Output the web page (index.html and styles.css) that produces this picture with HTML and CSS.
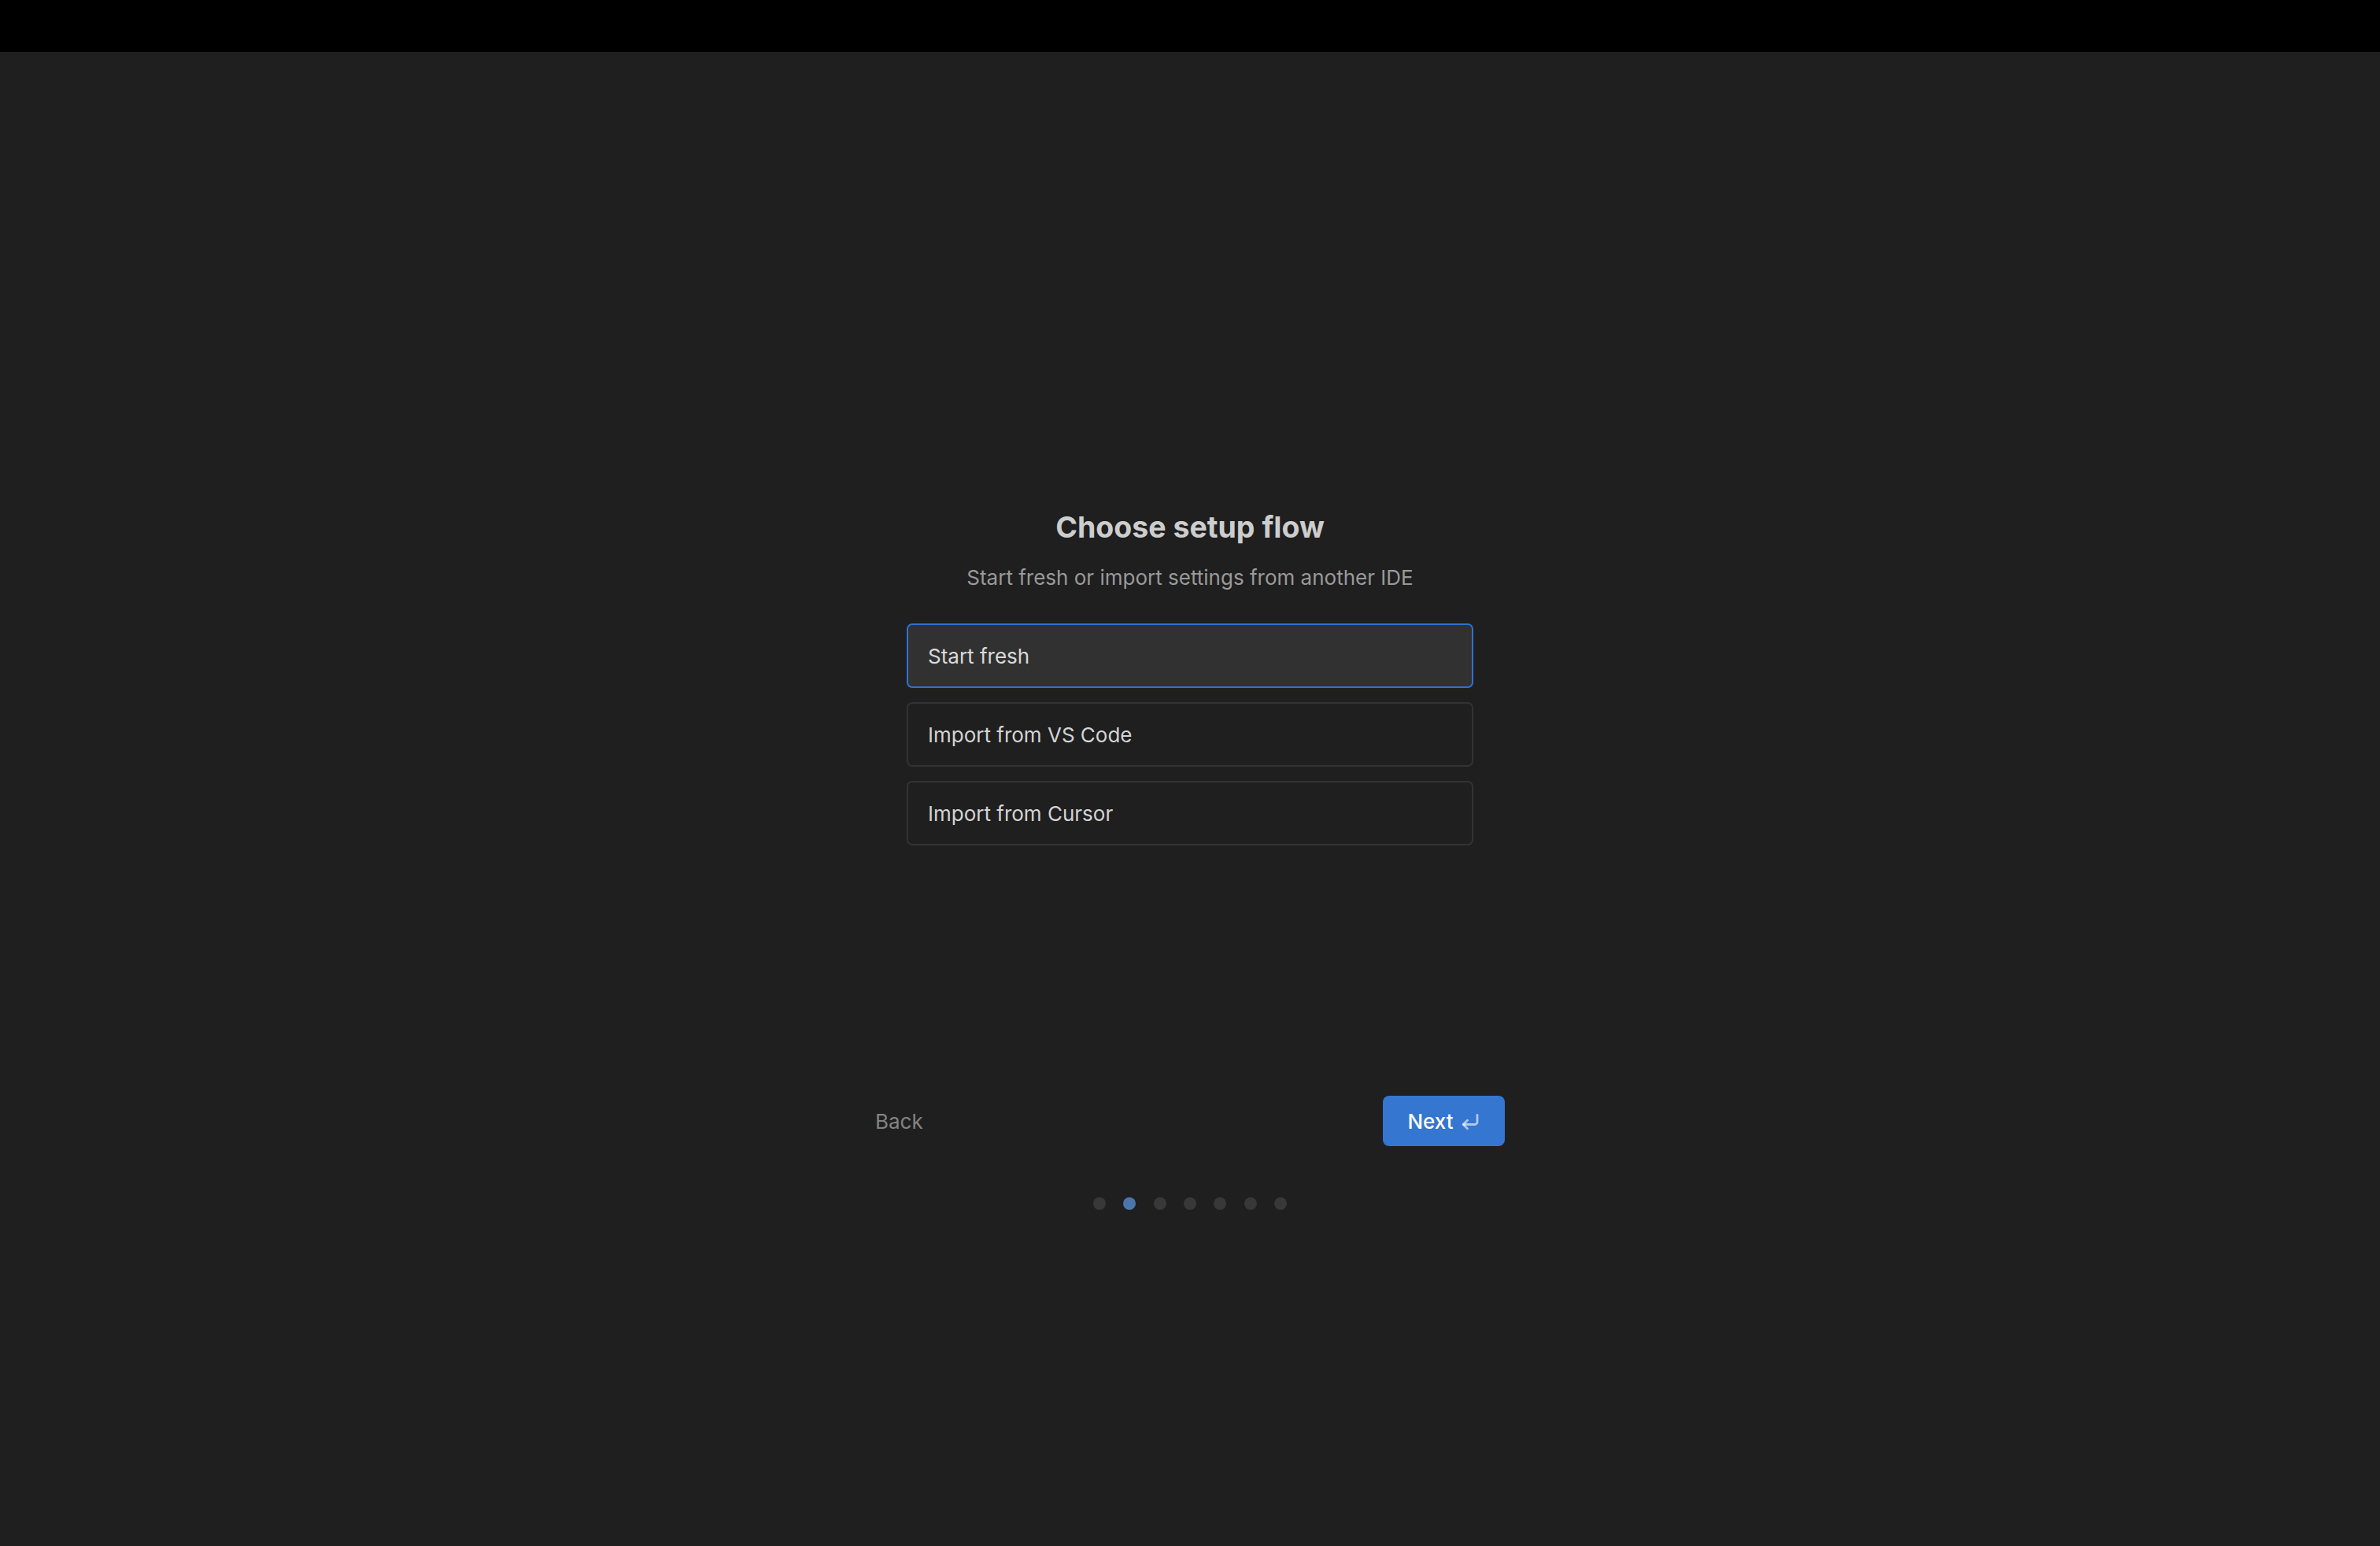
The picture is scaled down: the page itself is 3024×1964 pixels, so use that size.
FILE: index.html
```html
<!DOCTYPE html>
<html lang="en">
<head>
<meta charset="utf-8">
<title>Choose setup flow</title>
<link rel="stylesheet" href="styles.css">
</head>
<body>
<div class="topbar"></div>
<main class="screen">
  <section class="setup">
    <h1 class="title">Choose setup flow</h1>
    <p class="subtitle">Start fresh or import settings from another IDE</p>
    <div class="options">
      <div class="option selected">Start fresh</div>
      <div class="option">Import from VS Code</div>
      <div class="option">Import from Cursor</div>
    </div>
  </section>
  <nav class="nav">
    <button class="back">Back</button>
    <button class="next">Next
      <svg class="enter" width="24" height="20" viewBox="0 0 24 20" fill="none">
        <path d="M20 1.5V10.5a3 3 0 0 1-3 3H2.5" stroke="currentColor" stroke-width="2.8" stroke-linecap="round" stroke-linejoin="round"/>
        <path d="M7.5 8.2L2.2 13.5L7.5 18.8" stroke="currentColor" stroke-width="2.8" stroke-linecap="round" stroke-linejoin="round"/>
      </svg>
    </button>
  </nav>
  <div class="dots">
    <span class="dot"></span>
    <span class="dot active"></span>
    <span class="dot"></span>
    <span class="dot"></span>
    <span class="dot"></span>
    <span class="dot"></span>
    <span class="dot"></span>
  </div>
</main>
</body>
</html>
```
FILE: styles.css
```css
* { box-sizing: border-box; }
html, body {
  margin: 0;
  padding: 0;
  background: #1f1f1f;
  font-family: Inter, "Noto Sans", "Liberation Sans", sans-serif;
}
.topbar {
  height: 66px;
  background: #000;
}
.screen {
  height: 1898px;
  background: #1f1f1f;
  display: flex;
  flex-direction: column;
  align-items: center;
  padding-top: 582px;
}
.setup {
  display: flex;
  flex-direction: column;
  align-items: center;
}
.title {
  margin: 0;
  font-size: 37.5px;
  line-height: 44px;
  font-weight: 700;
  color: #cdcdcd;
}
.subtitle {
  margin: 24px 0 0;
  font-size: 26px;
  line-height: 36px;
  color: #9a9a9a;
}
.options {
  margin-top: 40px;
  width: 720px;
  display: flex;
  flex-direction: column;
  gap: 18px;
}
.option {
  height: 82px;
  border: 2px solid #333333;
  border-radius: 7px;
  padding: 0 25px;
  display: flex;
  align-items: center;
  font-size: 26px;
  color: #d4d4d4;
  background: #1f1f1f;
}
.option.selected {
  border-color: #2f72d0;
  background: #313131;
  color: #dadada;
}
.nav {
  margin-top: 318px;
  width: 800px;
  display: flex;
  justify-content: space-between;
  align-items: center;
}
.back {
  background: none;
  border: none;
  padding: 0;
  font-family: inherit;
  font-size: 26px;
  color: #838383;
}
.next {
  height: 64px;
  width: 155px;
  border: none;
  border-radius: 8px;
  background: #3476d0;
  color: #ffffff;
  font-family: inherit;
  font-size: 26px;
  font-weight: 500;
  display: flex;
  align-items: center;
  justify-content: center;
  gap: 10px;
  padding: 0;
}
.enter {
  color: rgba(255, 255, 255, 0.6);
  margin-top: 2px;
}
.dots {
  margin-top: 65px;
  display: flex;
  gap: 22.4px;
}
.dot {
  width: 16px;
  height: 16px;
  border-radius: 50%;
  background: #383838;
}
.dot.active {
  background: #4b76ad;
}
```
